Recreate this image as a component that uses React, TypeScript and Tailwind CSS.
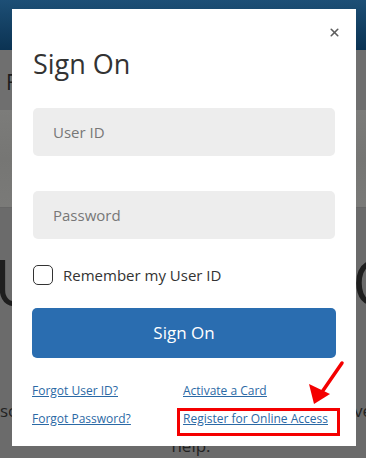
import { X } from "lucide-react";

const font = { fontFamily: '"Open Sans", "Noto Sans", sans-serif' };

function Field({ label }: { label: string }) {
	return (
		<div className="h-[48px] rounded-[5px] bg-[#ededed] flex items-center pl-[20px] text-[15px] text-[#777]">
			{label}
		</div>
	);
}

function Background() {
	return (
		<div className="flex flex-col h-full">
			<div className="h-[50px] bg-gradient-to-b from-[#1d4f76] to-[#0b3353]" />
			<div className="h-[60px] bg-[#6f6f6f] flex items-center pl-[6px] pt-[6px]">
				<span className="text-[21px] text-[#1c1c1c]">F</span>
			</div>
			<div className="h-[98px] bg-gradient-to-b from-[#7c7c7a] via-[#767674] to-[#7a7a78] border-b border-[#666]" />
			<div className="flex-1 bg-[#6b6b6b] flex flex-col">
				<div className="flex justify-between items-center mt-[44px] h-[60px] text-[64px] leading-none text-[#1e1e1e]">
					<span className="-ml-[6px]">U</span>
					<span className="-mr-[36px]">O</span>
				</div>
				<div className="flex justify-between mt-[88px] text-[17px] text-[#222] leading-[22px]">
					<span>sc</span>
					<span className="-mr-[6px]">ve</span>
				</div>
				<div className="text-center text-[17px] text-[#222] leading-[22px] mt-[13px] pl-[16px]">
					help.
				</div>
			</div>
		</div>
	);
}

export default function App() {
	return (
		<div className="relative w-[366px] h-[458px] overflow-hidden" style={font}>
			<Background />

			<div className="absolute left-[12px] top-[9px] w-[344px] h-[437px] bg-white px-[21px] pt-[17px]">
				<div className="flex justify-end -mr-[6px]">
					<X size={13} strokeWidth={3} className="text-[#5c5c5c]" />
				</div>
				<h1 className="text-[27px] leading-[32px] text-[#333] mt-[9px]">Sign On</h1>

				<div className="mt-[28px] flex flex-col gap-[35px]">
					<Field label="User ID" />
					<Field label="Password" />
				</div>

				<label className="mt-[25px] flex items-center gap-[10px] text-[15px] text-[#333]">
					<span className="w-[20px] h-[20px] rounded-[5px] border-[1.5px] border-[#333]" />
					Remember my User ID
				</label>

				<button className="mt-[21px] -mx-[1px] w-[304px] h-[50px] rounded-[5px] bg-[#2a6db0] text-white text-[17px] font-medium">
					Sign On
				</button>

				<div className="mt-[25px] grid grid-cols-[151px_1fr] gap-y-[12px] -ml-[1px] text-[12px] leading-[16px] text-[#2b69a5] underline">
					<a>Forgot User ID?</a>
					<a>Activate a Card</a>
					<a>Forgot Password?</a>
					<a>Register for Online Access</a>
				</div>
			</div>

			<svg className="absolute inset-0" width="366" height="458" viewBox="0 0 366 458">
				<rect x="178.5" y="409.5" width="160" height="25" fill="none" stroke="#f40000" strokeWidth="3" />
				<line x1="342" y1="363" x2="322" y2="392" stroke="#f40000" strokeWidth="3.5" strokeLinecap="round" />
				<polygon points="314,404 309,384 330,394" fill="#f40000" />
			</svg>
		</div>
	);
}
